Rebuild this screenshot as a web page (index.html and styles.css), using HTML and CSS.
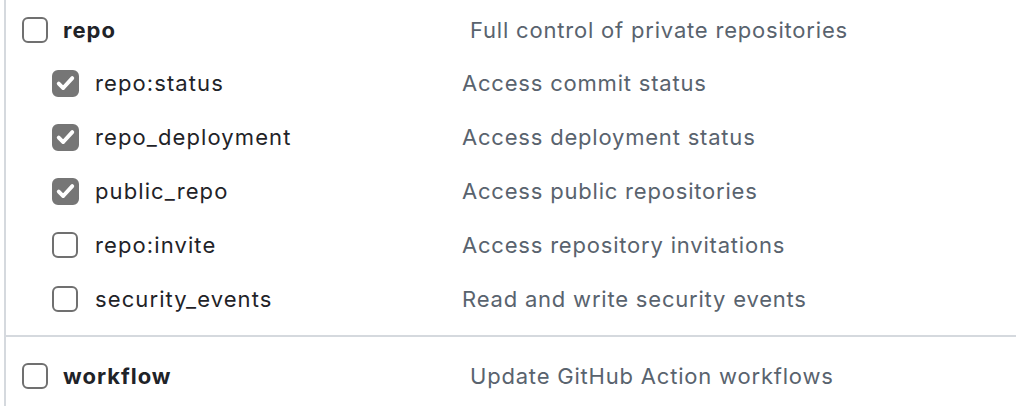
FILE: index.html
```html
<!DOCTYPE html>
<html>
<head>
<meta charset="utf-8">
<link rel="stylesheet" href="styles.css">
</head>
<body>
<div class="scopes">
  <div class="group">
    <div class="row top">
      <span class="cb"></span>
      <span class="name bold">repo</span>
      <span class="desc">Full control of private repositories</span>
    </div>
    <div class="subs">
      <div class="row sub">
        <span class="cb on"><svg viewBox="0 0 16 16"><path d="M3.3 8.4l3.1 3.1 6.3-6.9" /></svg></span>
        <span class="name">repo:status</span>
        <span class="desc">Access commit status</span>
      </div>
      <div class="row sub">
        <span class="cb on"><svg viewBox="0 0 16 16"><path d="M3.3 8.4l3.1 3.1 6.3-6.9" /></svg></span>
        <span class="name">repo_deployment</span>
        <span class="desc">Access deployment status</span>
      </div>
      <div class="row sub">
        <span class="cb on"><svg viewBox="0 0 16 16"><path d="M3.3 8.4l3.1 3.1 6.3-6.9" /></svg></span>
        <span class="name">public_repo</span>
        <span class="desc">Access public repositories</span>
      </div>
      <div class="row sub">
        <span class="cb"></span>
        <span class="name">repo:invite</span>
        <span class="desc">Access repository invitations</span>
      </div>
      <div class="row sub">
        <span class="cb"></span>
        <span class="name">security_events</span>
        <span class="desc">Read and write security events</span>
      </div>
    </div>
  </div>
  <div class="group divided">
    <div class="row top last">
      <span class="cb"></span>
      <span class="name bold">workflow</span>
      <span class="desc">Update GitHub Action workflows</span>
    </div>
  </div>
</div>
</body>
</html>
```

FILE: styles.css
```css
html, body {
  margin: 0;
  padding: 0;
  background: #ffffff;
}
body {
  font-family: Inter, "Noto Sans", "Liberation Sans", sans-serif;
  font-size: 22px;
  letter-spacing: 0.8px;
  color: #1f2328;
  overflow: hidden;
}
.scopes {
  margin-left: 4px;
  border-left: 2px solid #d5d9de;
  height: 406px;
}
.group.divided {
  border-top: 2px solid #d5d9de;
  margin-left: -2px;
  padding-left: 2px;
}
.row {
  display: grid;
  align-items: center;
}
.row.top {
  grid-template-columns: 26px 392px 1fr;
  column-gap: 15px;
  padding-left: 16px;
  height: 56px;
  padding-top: 4px;
  box-sizing: border-box;
}
.row.top.last {
  height: 78px;
  padding-top: 0;
}
.subs {
  padding-bottom: 9px;
}
.row.sub {
  grid-template-columns: 27px 351px 1fr;
  column-gap: 16px;
  padding-left: 46px;
  height: 54px;
}
.cb {
  width: 26px;
  height: 26px;
  box-sizing: border-box;
  border: 2px solid #707070;
  border-radius: 6px;
  background: #fff;
  display: flex;
  align-items: center;
  justify-content: center;
}
.cb.on {
  width: 27px;
  height: 27px;
  background: #767676;
  border-color: #767676;
}
.cb svg {
  width: 24px;
  height: 24px;
  fill: none;
  stroke: #ffffff;
  stroke-width: 2.7;
  stroke-linecap: round;
  stroke-linejoin: round;
}
.name {
  white-space: nowrap;
  letter-spacing: 1.1px;
}
.bold {
  font-weight: 700;
  letter-spacing: 1px;
}
.desc {
  color: #59636e;
  white-space: nowrap;
}
```
